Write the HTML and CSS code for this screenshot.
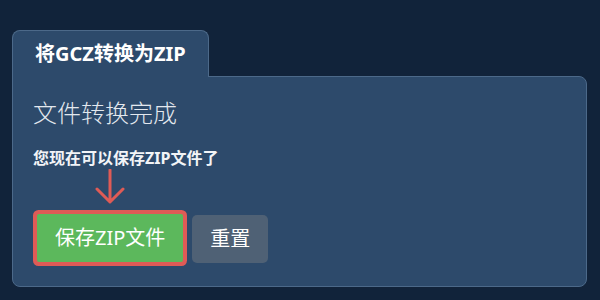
FILE: index.html
```html
<!DOCTYPE html>
<html>
<head>
    <meta charset="utf-8">
    <title>将GCZ转换为ZIP</title>
    <link rel="stylesheet" href="styles.css">
</head>
<body>
    <div class="converter">
        <!-- Tab header -->
        <div class="tab">将GCZ转换为ZIP</div>

        <!-- Result panel -->
        <div class="panel">
            <h2 class="panel-title">文件转换完成</h2>
            <p class="panel-text">您现在可以保存ZIP文件了</p>

            <div class="actions">
                <div class="highlight">
                    <svg class="arrow" width="30" height="36" viewBox="0 0 30 36">
                        <path d="M15 1 V33 M2 20 L15 33 L28 20" fill="none" stroke="#df5b56" stroke-width="3" stroke-linecap="round" stroke-linejoin="round"/>
                    </svg>
                    <button type="button" class="btn btn-save">保存ZIP文件</button>
                </div>
                <button type="button" class="btn btn-reset">重置</button>
            </div>
        </div>
    </div>
</body>
</html>
```

FILE: styles.css
```css
body {
    margin: 0;
    background: #11233a;
    font-family: "Noto Sans", "Noto Sans CJK SC", sans-serif;
    color: #fff;
}

.converter {
    padding: 30px 13px 0 12px;
}

.tab {
    display: inline-block;
    position: relative;
    z-index: 1;
    margin-bottom: -1px;
    padding: 0 22px;
    height: 46px;
    line-height: 46px;
    font-size: 20px;
    font-weight: bold;
    background: #2d4a6b;
    border: 1px solid #4c6989;
    border-bottom: none;
    border-radius: 8px 8px 0 0;
}

.panel {
    background: #2d4a6b;
    border: 1px solid #4c6989;
    border-radius: 0 8px 8px 8px;
    padding: 21px 20px 20px;
}

.panel-title {
    margin: 0 0 21px;
    font-size: 24px;
    font-weight: 300;
    line-height: 29px;
    color: #e3e8ee;
}

.panel-text {
    margin: 0;
    font-size: 16px;
    font-weight: bold;
    line-height: 20px;
    color: #f2f4f7;
}

.actions {
    display: flex;
    align-items: flex-end;
    gap: 5px;
}

.highlight {
    display: flex;
    flex-direction: column;
    align-items: center;
}

.arrow {
    display: block;
    margin: 1px 0 5px;
}

.btn {
    font-family: inherit;
    font-size: 20px;
    line-height: 24px;
    padding: 12px 18px;
    color: #fff;
    border: none;
    border-radius: 4px;
    cursor: pointer;
}

.btn-save {
    margin: 4px;
    background: #5cb85c;
    border-radius: 2px;
    box-shadow: 0 0 0 4px #df5b56;
}

.btn-reset {
    margin-bottom: 3px;
    background: #4f6175;
    border-radius: 5px;
}
```
